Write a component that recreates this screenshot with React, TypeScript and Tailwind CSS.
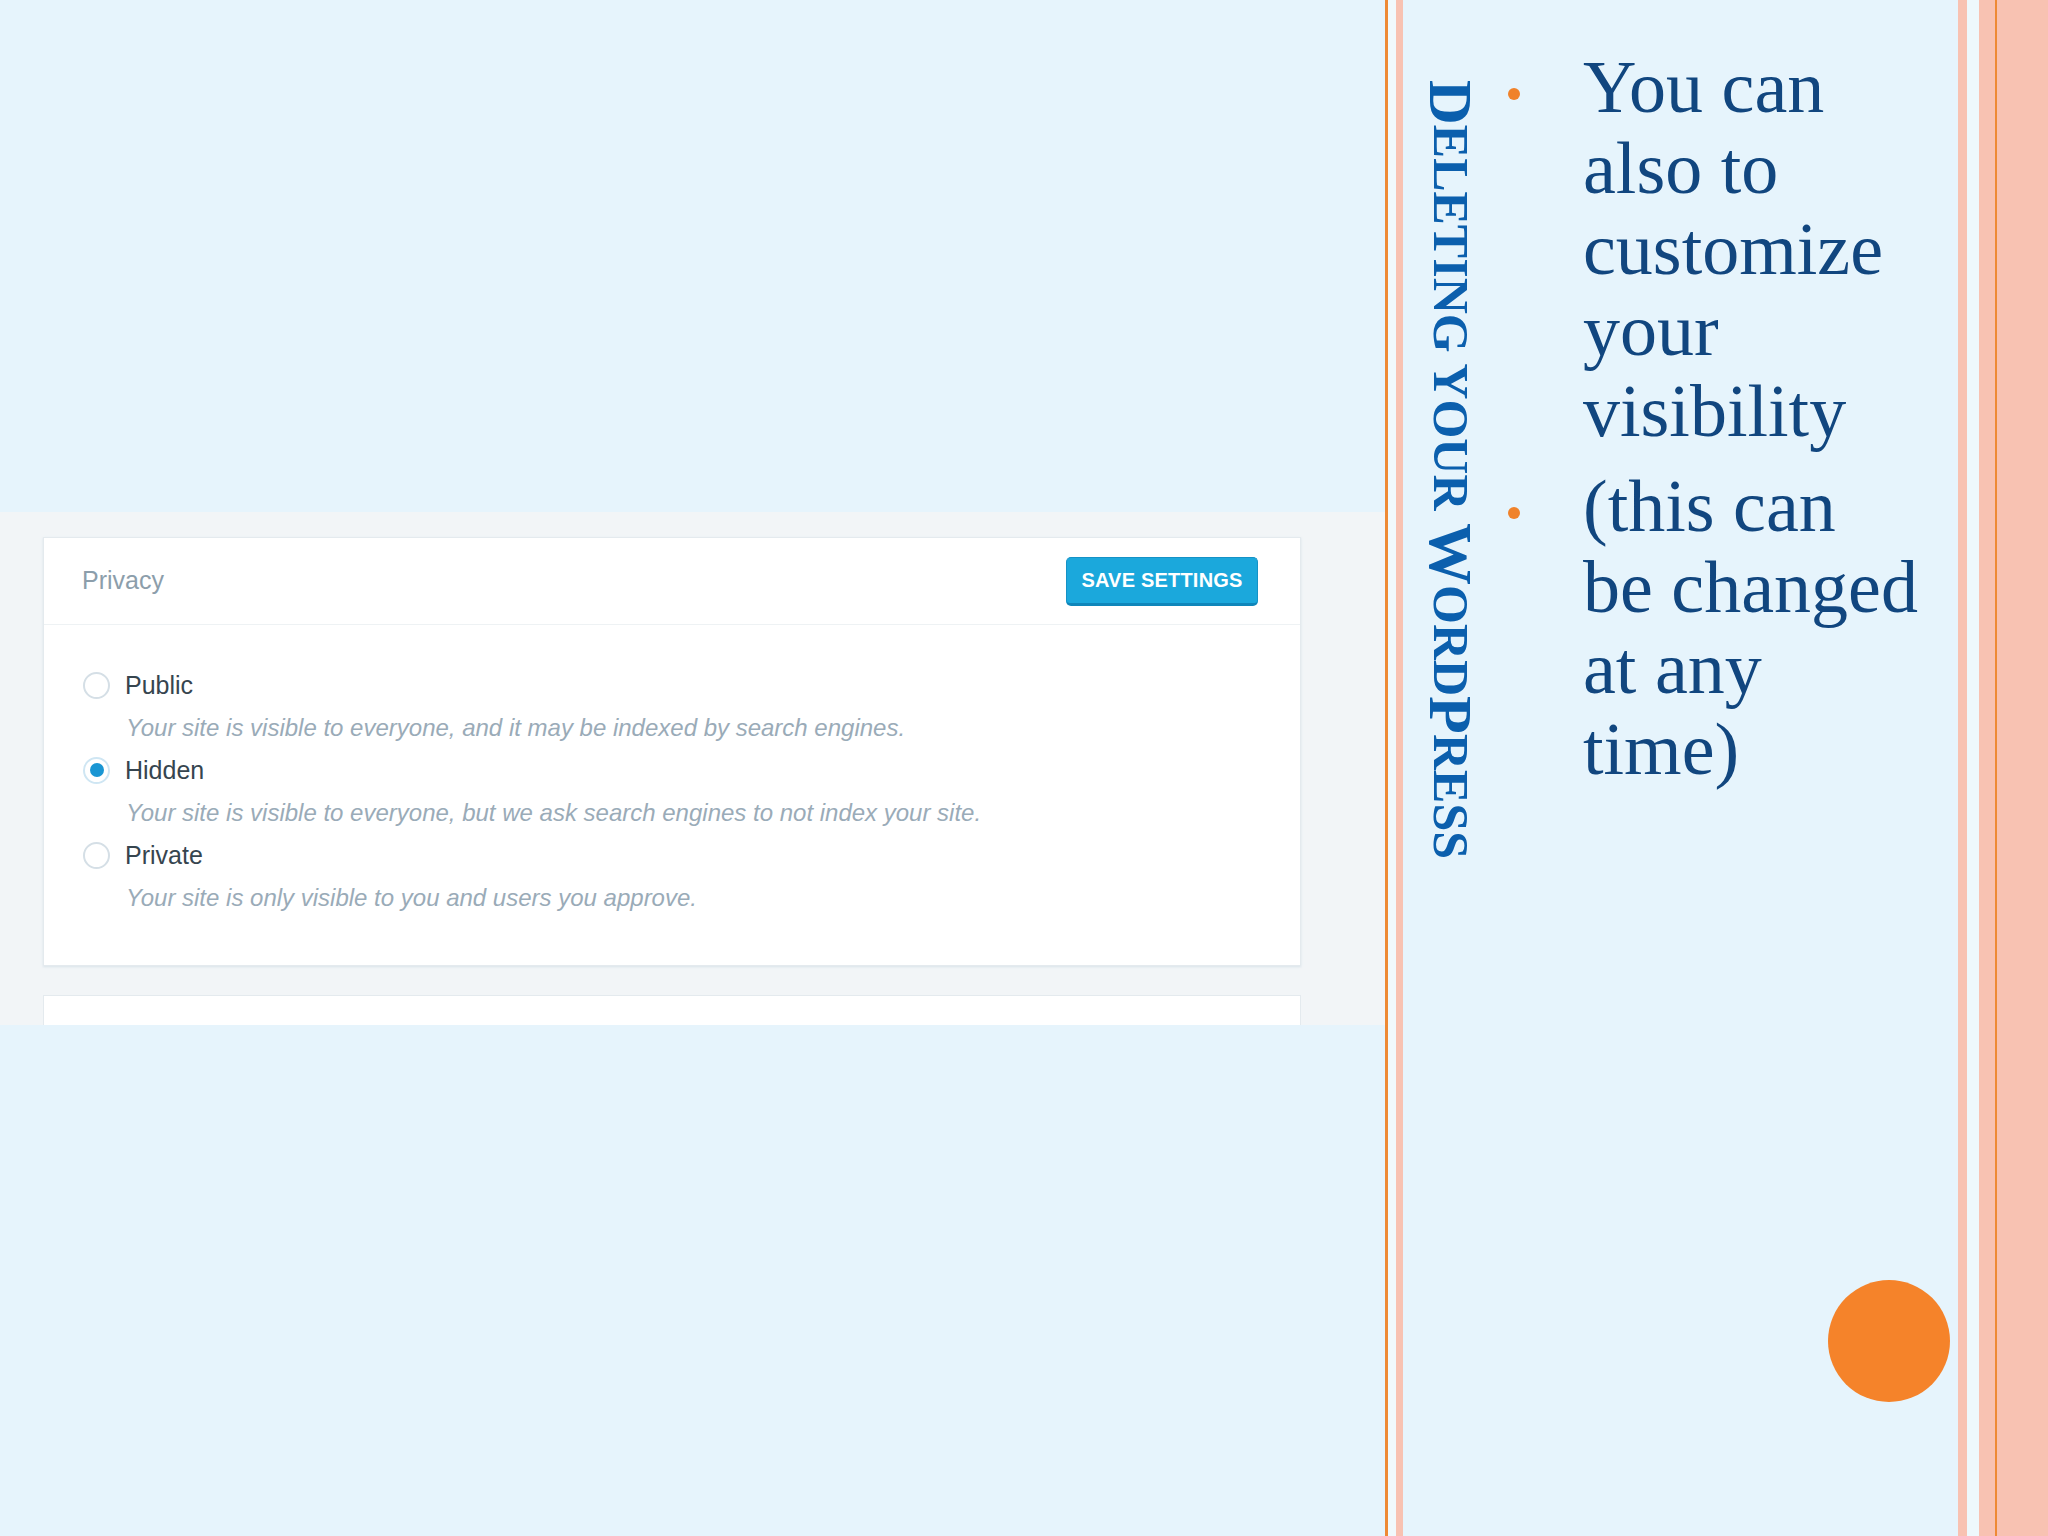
import React from "react";

const options = [
  {
    label: "Public",
    desc: "Your site is visible to everyone, and it may be indexed by search engines.",
    checked: false,
  },
  {
    label: "Hidden",
    desc: "Your site is visible to everyone, but we ask search engines to not index your site.",
    checked: true,
  },
  {
    label: "Private",
    desc: "Your site is only visible to you and users you approve.",
    checked: false,
  },
];

function Radio({ checked }: { checked: boolean }) {
  if (checked) {
    return (
      <span className="w-[27px] h-[27px] rounded-full border-2 border-[#cfe6f3] bg-white flex items-center justify-center shrink-0">
        <span className="w-[14px] h-[14px] rounded-full bg-[#1a96d3]" />
      </span>
    );
  }
  return <span className="w-[27px] h-[27px] rounded-full border-2 border-[#d5dfe6] bg-white shrink-0" />;
}

function PrivacyCard() {
  return (
    <div className="w-[1258px] bg-white border border-[#e4eaee] shadow-[0_1px_2px_rgba(200,215,225,0.6)] font-['Liberation_Sans',Arial,sans-serif]">
      <div className="h-[87px] border-b border-[#eef2f4] flex items-center justify-between pl-[38px] pr-[42px]">
        <span className="text-[25px] text-[#8c9eab]">Privacy</span>
        <button className="w-[192px] h-[49px] rounded-[5px] bg-[#1ba8dc] border border-[#1592c6] border-b-[3px] border-b-[#0f86ba] text-white font-bold text-[20px] tracking-[0.2px] uppercase">
          Save Settings
        </button>
      </div>
      <div className="pt-[38px] pb-[47px] pl-[39px]">
        {options.map((o) => (
          <div key={o.label}>
            <div className="flex items-center gap-[15px] h-[44px]">
              <Radio checked={o.checked} />
              <span className="text-[25px] leading-[44px] text-[#36454f]">{o.label}</span>
            </div>
            <div className="pl-[43px] text-[24px] leading-[41px] italic text-[#9aabb8]">{o.desc}</div>
          </div>
        ))}
      </div>
    </div>
  );
}

function Title() {
  const big = "text-[62px]";
  const small = "text-[50px]";
  return (
    <div className="[writing-mode:vertical-rl] font-['Liberation_Serif','Times_New_Roman',serif] font-bold text-[#0b5fad] leading-[62px] text-[62px] whitespace-nowrap">
      <span className={big}>D</span>
      <span className={small}>ELETING YOUR </span>
      <span className={big}>W</span>
      <span className={small}>ORD</span>
      <span className={big}>P</span>
      <span className={small}>RESS</span>
    </div>
  );
}

function Bullet({ lines, className }: { lines: string[]; className?: string }) {
  return (
    <div className={`flex ${className ?? ""}`}>
      <span className="w-[12px] h-[12px] rounded-full bg-[#f0822a] mt-[41px] shrink-0" />
      <div className="ml-[63px] text-[74px] leading-[81px] text-[#11467f] whitespace-nowrap">
        {lines.map((l) => (
          <div key={l}>{l}</div>
        ))}
      </div>
    </div>
  );
}

export default function App() {
  return (
    <div className="w-[2048px] h-[1536px] flex bg-[#e6f4fc] overflow-hidden">
      <div className="w-[1385px] shrink-0 flex flex-col">
        <div className="h-[512px]" />
        <div className="h-[513px] bg-[#f2f5f7] pt-[25px] pl-[43px] overflow-hidden">
          <PrivacyCard />
          <div className="w-[1258px] h-[40px] mt-[29px] bg-white border border-[#e4eaee]" />
        </div>
      </div>

      <div className="w-[3px] bg-[#ee8a35] shrink-0" />
      <div className="w-[8px] bg-[#f1f9fc] shrink-0" />
      <div className="w-[7px] bg-[#f8c2b2] shrink-0" />

      <div className="flex-1 flex min-w-0">
        <div className="w-[105px] shrink-0 pl-[17px] pt-[80px]">
          <Title />
        </div>
        <div className="flex-1 flex flex-col pt-[47px] font-['Liberation_Serif','Times_New_Roman',serif]">
          <Bullet lines={["You can", "also to", "customize", "your", "visibility"]} />
          <Bullet className="mt-[14px]" lines={["(this can", "be changed", "at any", "time)"]} />
          <div className="mt-auto self-end mr-[8px] mb-[134px] w-[122px] h-[122px] rounded-full bg-[#f5832a]" />
        </div>
      </div>

      <div className="w-[9px] bg-[#f8c2b2] shrink-0" />
      <div className="w-[12px] bg-[#eef8fc] shrink-0" />
      <div className="w-[16px] bg-[#f8c2b2] shrink-0" />
      <div className="w-[2px] bg-[#ee8a35] shrink-0" />
      <div className="w-[51px] bg-[#f8c2b2] shrink-0" />
    </div>
  );
}
